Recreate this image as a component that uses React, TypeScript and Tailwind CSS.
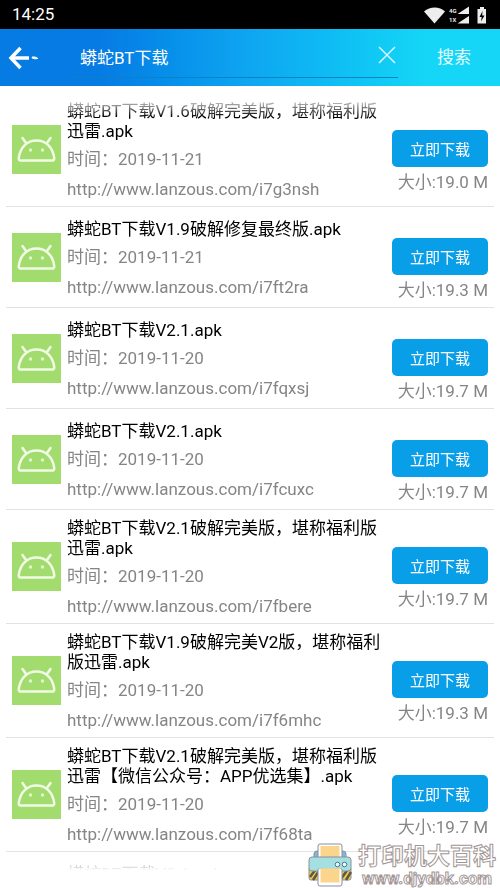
import React from 'react';

interface Resource {
    id: string;
    title: string;
    date: string;
    size: string;
}

const resources: Resource[] = [
    { id: 'i7g3nsh', title: '蟒蛇BT下载V1.6破解完美版，堪称福利版迅雷.apk', date: '2019-11-21', size: '19.0 M' },
    { id: 'i7ft2ra', title: '蟒蛇BT下载V1.9破解修复最终版.apk', date: '2019-11-21', size: '19.3 M' },
    { id: 'i7fqxsj', title: '蟒蛇BT下载V2.1.apk', date: '2019-11-20', size: '19.7 M' },
    { id: 'i7fcuxc', title: '蟒蛇BT下载V2.1.apk', date: '2019-11-20', size: '19.7 M' },
    { id: 'i7fbere', title: '蟒蛇BT下载V2.1破解完美版，堪称福利版迅雷.apk', date: '2019-11-20', size: '19.7 M' },
    { id: 'i7f6mhc', title: '蟒蛇BT下载V1.9破解完美V2版，堪称福利版迅雷.apk', date: '2019-11-20', size: '19.3 M' },
    { id: 'i7f68ta', title: '蟒蛇BT下载V2.1破解完美版，堪称福利版迅雷【微信公众号：APP优选集】.apk', date: '2019-11-20', size: '19.7 M' },
    { id: 'i7f5xyb', title: '蟒蛇BT下载V2.1.apk', date: '2019-11-20', size: '19.7 M' },
];

const AndroidIcon: React.FC = () => (
    <svg viewBox="0 0 49 49" className="w-[49px] h-[49px] shrink-0" aria-hidden="true">
        <rect width="49" height="49" fill="#a3dc6e" />
        <g fill="none" stroke="#f1fbe6" strokeWidth="2.5" strokeLinecap="round" strokeLinejoin="round">
            <path d="M8.500 35.500H40.500Q42.500 35.500 42.200 33C41 22.500 34 15.500 24.500 15.500S8 22.500 6.800 33Q6.500 35.500 8.500 35.500z" />
            <path d="M14 18l-3.500-5M35 18l3.500-5" />
        </g>
        <circle cx="18.500" cy="25" r="1.700" fill="#e3f6cf" />
        <circle cx="30.500" cy="25" r="1.700" fill="#e3f6cf" />
    </svg>
);

const StatusBar: React.FC = () => (
    <div className="h-[29px] shrink-0 bg-black text-white flex items-center justify-between px-3">
        <span className="text-[17px]">14:25</span>
        <svg viewBox="0 0 64 18" className="w-16 h-[18px]" fill="#ededed" aria-hidden="true">
            <path d="M0 5.500C6 .3 15.500.3 21 5.500L10.500 17.500z" />
            <path d="M45 .5V8H33.500zM45 10v7.500H33.500z" />
            <path d="M53.500 3H56V1h4v2h2v14.500h-8.500z" />
            <path d="M58.500 5l-3 6h2.200l-.7 4.500 3.500-6h-2.300z" fill="#000" />
            <text x="25" y="7" fontSize="6" fontWeight="700">4G</text>
            <text x="25" y="16" fontSize="6" fontWeight="700">1X</text>
        </svg>
    </div>
);

const SearchHeader: React.FC = () => (
    <header className="h-[57px] shrink-0 flex items-center bg-linear-to-r from-[#077be4] from-20% via-[#0fa6f1] via-50% to-[#15d6f6] to-85% text-white">
        <button aria-label="返回" className="w-[68px] h-full pl-2">
            <svg viewBox="0 0 32 24" className="w-8 h-6" fill="none" stroke="#fff" aria-hidden="true">
                <path d="M12.500 2L3 12l9.500 10" strokeWidth="3.500" />
                <path d="M3 12h18" strokeWidth="3.500" />
                <path d="M24 11h3l3 1.500-3 .3-2.500-.5z" fill="#fff" strokeWidth="1" />
            </svg>
        </button>
        <div className="flex-1 h-10 flex items-center border-b border-[#0a83c4] pl-3">
            <input
                aria-label="搜索内容"
                defaultValue="蟒蛇BT下载"
                className="flex-1 min-w-0 pt-1 bg-transparent text-[17px] outline-none"
            />
            <button aria-label="清除" className="w-[20px] pb-1">
                <svg viewBox="0 0 18 18" className="w-[18px] h-[18px]" stroke="#d8f7ff" strokeWidth="1.5" aria-hidden="true">
                    <path d="M1 1l16 16M17 1L1 17" />
                </svg>
            </button>
        </div>
        <button className="w-[102px] h-full pl-2.5 text-[17px] text-[#e2fbff]">搜索</button>
    </header>
);

const ResourceRow: React.FC<{ item: Resource }> = ({ item }) => (
    <li className="min-h-[101px] flex items-center mx-1.5 px-1.5 border-b border-[#e2e2e2]">
        <AndroidIcon />
        <div className="flex-1 min-w-0 px-1.5 pt-2 pb-0.5">
            <h3 className="text-[17px] leading-5 text-black break-all">{item.title}</h3>
            <p className="mt-[3px] text-[17px] leading-[30px] text-[#858585]">时间：{item.date}</p>
            <a href={`http://www.lanzous.com/${item.id}`} className="block text-[17px] leading-[30px] text-[#858585]">
                http://www.lanzous.com/{item.id}
            </a>
        </div>
        <div className="w-24 shrink-0 pt-6">
            <button className="w-full h-[37px] rounded-[5px] bg-[#089fe8] pt-1 text-[15px] text-white">立即下载</button>
            <p className="mt-1 text-right text-[17px] leading-[22px] text-[#858585] whitespace-nowrap">大小:{item.size}</p>
        </div>
    </li>
);

const Watermark: React.FC = () => (
    <div className="absolute right-0 bottom-0 flex items-center gap-1.5 pr-1">
        <svg viewBox="0 0 44 44" className="w-11 h-11" stroke="#8b8fa0" strokeWidth="1" aria-hidden="true">
            <rect x="6" y="8" width="32" height="12" rx="3" fill="#7fb9d6" />
            <rect x="10" y="1" width="24" height="18" rx="2" fill="#fff" />
            <path d="M12.500 3h19v13h-19z" fill="#fbd58c" stroke="none" />
            <rect x="1" y="24" width="42" height="13" rx="2" fill="#efc943" />
            <path d="M2 34l6-8M5 37l6-9M33 36l7-10M38 37l5-8" stroke="#5d5747" strokeWidth="2.500" />
            <rect x="1" y="14" width="42" height="14" rx="3" fill="#a5e0e0" />
            <rect x="10" y="25" width="24" height="18" rx="2" fill="#fff" />
            <path d="M9.500 20h25v5.500h-25z" fill="#a5e0e0" stroke="none" />
            <path d="M12.500 25.500h19v14h-19z" fill="#fbd58c" stroke="none" />
            <circle cx="29.500" cy="21.500" r="2.300" fill="#e8fafa" stroke="#53708e" />
            <circle cx="36.500" cy="21.500" r="2.300" fill="#e8fafa" stroke="#53708e" />
        </svg>
        <div className="pt-1 text-center font-bold text-white [-webkit-text-stroke:1px_#a39696]">
            <p className="text-[23px] leading-[22px]">打印机大百科</p>
            <p className="text-[17px] leading-5">www.djydbk.com</p>
        </div>
    </div>
);

export default function App() {
    return (
        <div className="relative h-screen flex flex-col overflow-hidden bg-white font-[Roboto,'Noto_Sans_CJK_SC',sans-serif]">
            <StatusBar />
            <SearchHeader />
            <main className="flex-1 min-h-0 mt-[11px] mb-[18px] overflow-hidden [mask-image:linear-gradient(to_bottom,transparent,black_20px,black_calc(100%-20px),transparent)]">
                <ul className="-mt-1">
                    {resources.map((item) => (
                        <ResourceRow key={item.id} item={item} />
                    ))}
                </ul>
            </main>
            <Watermark />
        </div>
    );
}
